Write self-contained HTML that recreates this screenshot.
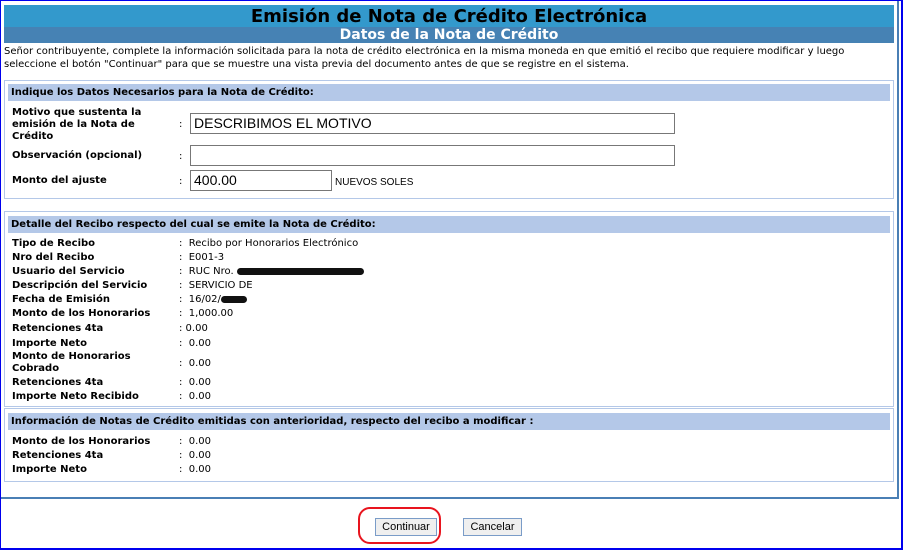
<!DOCTYPE html>
<html><head><meta charset="utf-8"><style>
*{margin:0;padding:0;box-sizing:border-box}
body{width:903px;height:550px;position:relative;background:#fff;font-family:"DejaVu Sans",Verdana,sans-serif;font-size:10px;color:#000;overflow:hidden}
.a{position:absolute;white-space:nowrap}
.frame{position:absolute;left:0;top:0;width:903px;height:550px;border:1px solid #0000ee;border-right:2px solid #0000ee;border-bottom:2px solid #0000ee}
.inner{position:absolute;left:1px;top:1px;width:898px;height:498px;border-right:2px solid #4a7fb5;border-bottom:2px solid #4a7fb5}
.box{position:absolute;left:4px;width:890px;border:1px solid #b4c8e8}
.hd{position:absolute;left:8px;width:882px;height:17px;background:#b4c8e8;font-weight:bold;font-size:10px;padding:3px 0 0 3px}
.l{position:absolute;left:12px;font-weight:bold;font-size:10px;white-space:nowrap}
.c{position:absolute;left:179px;font-size:10px;white-space:nowrap}
.inp{position:absolute;border:1px solid #777;background:#fff;font-family:"Liberation Sans",Arial,sans-serif;font-size:14px;padding:1px 0 0 3px}
.btn{position:absolute;top:518px;height:18px;background:#efefef;border:1px solid #7a9cc8;font-family:"Liberation Sans",Arial,sans-serif;font-size:11px;text-align:center;line-height:16px}
.blot{display:inline-block;background:#111;border-radius:4px;height:7px;vertical-align:middle}
</style></head><body>
<div class="frame"></div>
<div class="inner"></div>
<div class="a" style="left:4px;top:5px;width:890px;height:22px;background:#3399cc"></div>
<div class="a" style="left:4px;top:27px;width:890px;height:16px;background:#4682b4"></div>
<div class="a" style="left:4px;top:5px;width:890px;text-align:center;font-size:18px;font-weight:bold;line-height:23px">Emisión de Nota de Crédito Electrónica</div>
<div class="a" style="left:4px;top:27px;width:890px;text-align:center;font-size:14px;font-weight:bold;color:#fff;line-height:17px">Datos de la Nota de Crédito</div>
<div class="a" style="left:4px;top:45px;line-height:13px;font-size:10px">Señor contribuyente, complete la información solicitada para la nota de crédito electrónica en la misma moneda en que emitió el recibo que requiere modificar y luego<br>seleccione el botón "Continuar" para que se muestre una vista previa del documento antes de que se registre en el sistema.</div>

<div class="box" style="top:80px;height:119px"></div>
<div class="hd" style="top:84px">Indique los Datos Necesarios para la Nota de Crédito:</div>
<div class="l" style="top:107px;line-height:12px">Motivo que sustenta la<br>emisión de la Nota de<br>Crédito</div>
<div class="c" style="top:119px">:</div>
<div class="inp" style="left:190px;top:113px;width:485px;height:21px">DESCRIBIMOS EL MOTIVO</div>
<div class="l" style="top:150px">Observación (opcional)</div>
<div class="c" style="top:151px">:</div>
<div class="inp" style="left:190px;top:145px;width:485px;height:21px"></div>
<div class="l" style="top:175px">Monto del ajuste</div>
<div class="c" style="top:176px">:</div>
<div class="inp" style="left:190px;top:170px;width:142px;height:21px">400.00</div>
<div class="a" style="left:335px;top:177px;font-family:'Liberation Sans',Arial,sans-serif;font-size:10px">NUEVOS SOLES</div>

<div class="box" style="top:211px;height:196px"></div>
<div class="hd" style="top:216px">Detalle del Recibo respecto del cual se emite la Nota de Crédito:</div>
<div class="l" style="top:238px">Tipo de Recibo</div><div class="c" style="top:238px">:&nbsp; Recibo por Honorarios Electrónico</div>
<div class="l" style="top:252px">Nro del Recibo</div><div class="c" style="top:252px">:&nbsp; E001-3</div>
<div class="l" style="top:266px">Usuario del Servicio</div><div class="c" style="top:266px">:&nbsp; RUC Nro. <span class="blot" style="width:127px"></span></div>
<div class="l" style="top:280px">Descripción del Servicio</div><div class="c" style="top:280px">:&nbsp; SERVICIO DE</div>
<div class="l" style="top:294px">Fecha de Emisión</div><div class="c" style="top:294px">:&nbsp; 16/02/<span class="blot" style="width:26px"></span></div>
<div class="l" style="top:308px">Monto de los Honorarios</div><div class="c" style="top:308px">:&nbsp; 1,000.00</div>
<div class="l" style="top:323px">Retenciones 4ta</div><div class="c" style="top:323px">:&nbsp;0.00</div>
<div class="l" style="top:338px">Importe Neto</div><div class="c" style="top:338px">:&nbsp; 0.00</div>
<div class="l" style="top:351px;line-height:12px">Monto de Honorarios<br>Cobrado</div><div class="c" style="top:358px">:&nbsp; 0.00</div>
<div class="l" style="top:377px">Retenciones 4ta</div><div class="c" style="top:377px">:&nbsp; 0.00</div>
<div class="l" style="top:391px">Importe Neto Recibido</div><div class="c" style="top:391px">:&nbsp; 0.00</div>

<div class="box" style="top:408px;height:74px"></div>
<div class="hd" style="top:413px">Información de Notas de Crédito emitidas con anterioridad, respecto del recibo a modificar :</div>
<div class="l" style="top:436px">Monto de los Honorarios</div><div class="c" style="top:436px">:&nbsp; 0.00</div>
<div class="l" style="top:450px">Retenciones 4ta</div><div class="c" style="top:450px">:&nbsp; 0.00</div>
<div class="l" style="top:464px">Importe Neto</div><div class="c" style="top:464px">:&nbsp; 0.00</div>

<div class="btn" style="left:375px;width:62px">Continuar</div>
<div class="btn" style="left:463px;width:59px">Cancelar</div>
<div class="a" style="left:358px;top:507px;width:83px;height:37px;border:2px solid #e8141e;border-radius:12px"></div>
</body></html>
